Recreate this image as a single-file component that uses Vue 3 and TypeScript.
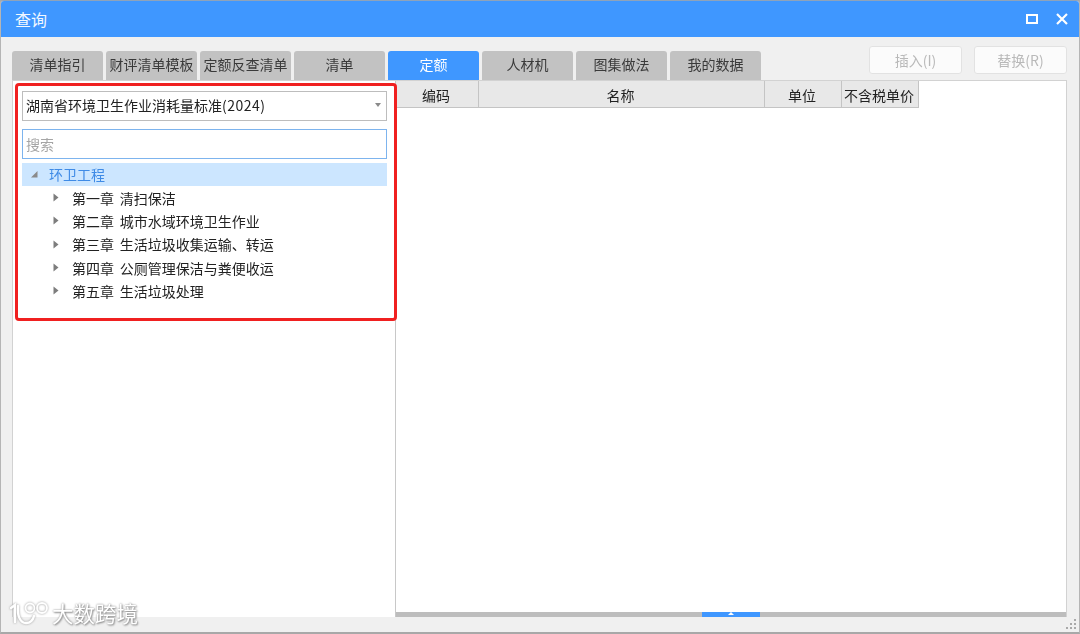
<script setup lang="ts">
const tabs: string[] = ['清单指引', '财评清单模板', '定额反查清单', '清单', '定额', '人材机', '图集做法', '我的数据']
const activeTab = '定额'
const chapters: string[] = [
  '第一章 清扫保洁',
  '第二章 城市水域环境卫生作业',
  '第三章 生活垃圾收集运输、转运',
  '第四章 公厕管理保洁与粪便收运',
  '第五章 生活垃圾处理',
]
const columns = [
  { label: '编码', cls: 'c1' },
  { label: '名称', cls: 'c2' },
  { label: '单位', cls: 'c3' },
  { label: '不含税单价', cls: 'c4' },
]
</script>

<template>
  <div class="window">
    <header class="titlebar">
      <span class="title">查询</span>
      <div class="winctl">
        <svg width="12" height="10" viewBox="0 0 12 10"><rect x="1" y="1" width="10" height="8" fill="none" stroke="#fff" stroke-width="2" /></svg>
        <svg width="12" height="12" viewBox="0 0 12 12"><path d="M1 1 L11 11 M11 1 L1 11" stroke="#fff" stroke-width="2.2" fill="none" /></svg>
      </div>
    </header>

    <div class="body">
      <div class="toolbar">
        <nav class="tabs">
          <div v-for="t in tabs" :key="t" class="tab" :class="{ active: t === activeTab }">{{ t }}</div>
        </nav>
        <div class="actions">
          <button class="btn" disabled>插入(I)</button>
          <button class="btn" disabled>替换(R)</button>
        </div>
      </div>

      <div class="panel">
        <aside class="left">
          <div class="select">
            <span>湖南省环境卫生作业消耗量标准<span class="year">(2024)</span></span>
            <i class="caret"></i>
          </div>
          <div class="search">搜索</div>
          <div class="tree-root">
            <svg class="arr-open" width="8" height="8" viewBox="0 0 8 8"><path d="M7.5 1 V7.5 H1 Z" fill="#8a8a8a" /></svg>
            <span>环卫工程</span>
          </div>
          <ul class="tree">
            <li v-for="c in chapters" :key="c">
              <svg class="arr" width="6" height="9" viewBox="0 0 6 9"><path d="M0.5 0.5 L5.5 4.5 L0.5 8.5 Z" fill="#7d7d7d" /></svg>
              <span>{{ c }}</span>
            </li>
          </ul>
        </aside>
        <section class="right">
          <div class="thead">
            <div v-for="c in columns" :key="c.label" class="th" :class="c.cls">{{ c.label }}</div>
          </div>
          <div class="tbody"></div>
          <div class="splitter">
            <div class="handle"><i></i></div>
          </div>
        </section>
      </div>

      <div class="statusbar">
        <svg class="grip" width="12" height="12" viewBox="0 0 12 12" fill="#a9a9a9">
          <rect x="8" y="0" width="2" height="2" /><rect x="4" y="4" width="2" height="2" /><rect x="8" y="4" width="2" height="2" />
          <rect x="0" y="8" width="2" height="2" /><rect x="4" y="8" width="2" height="2" /><rect x="8" y="8" width="2" height="2" />
        </svg>
      </div>
    </div>

    <div class="highlight"></div>

    <div class="watermark">
      <svg width="42" height="26" viewBox="0 0 42 26" fill="none" stroke="#fff" stroke-width="2.4" stroke-linecap="round">
        <path d="M2 8 L6 5 V22" />
        <path d="M9 6 C8 15 11 23 17 23 C21 23 24 20 25 16" />
        <circle cx="21" cy="8" r="4.500" stroke-width="1.800" />
        <circle cx="33" cy="8" r="5" stroke-width="1.800" />
      </svg>
      <span>大数跨境</span>
    </div>
  </div>
</template>

<style>
html, body { margin: 0; padding: 0; background: #a8a8a8; }
</style>

<style scoped>
.window {
  position: relative;
  width: 1080px;
  height: 634px;
  box-sizing: border-box;
  display: flex;
  flex-direction: column;
  background: #f0f0f0;
  border-top: 1px solid #8fa3ba;
  border-left: 1px solid #b5b5b5;
  border-right: 1px solid #b5b5b5;
  border-bottom: 2px solid #a8a8a8;
  border-radius: 4px 4px 0 0;
  overflow: hidden;
  font-family: "Noto Sans CJK SC", "Noto Sans", sans-serif;
  font-size: 14px;
  color: #222;
  filter: blur(0.5px);
}
.titlebar {
  flex: none;
  height: 36px;
  background: #3f97ff;
  display: flex;
  align-items: center;
  justify-content: space-between;
  padding: 0 11px 0 14px;
  color: #fff;
}
.title { font-size: 16px; line-height: 40px; color: #f2f8ff; }
.winctl { display: flex; align-items: center; gap: 18px; }
.body { flex: 1; display: flex; flex-direction: column; min-height: 0; }
.toolbar {
  flex: none;
  height: 44px;
  display: flex;
  justify-content: space-between;
  align-items: flex-start;
  padding: 0 12px 0 11px;
}
.tabs { display: flex; gap: 3px; margin-top: 14px; }
.tab {
  width: 91px;
  height: 29px;
  line-height: 27px;
  text-align: center;
  background: #c2c2c2;
  border-radius: 3px 3px 0 0;
  color: #3a3a3a;
  white-space: nowrap;
  font-size: 14px;
}
.tab.active { background: #3f97ff; color: #fff; }
.actions { display: flex; gap: 12px; margin-top: 9px; }
.btn {
  width: 93px;
  height: 28px;
  padding: 0;
  background: #fbfbfb;
  border: 1px solid #e2e2e2;
  border-radius: 3px;
  font: inherit;
  font-size: 14px;
  color: #b9b9b9;
}
.panel {
  flex: 1;
  display: flex;
  margin: -1px 12px 0 11px;
  min-height: 0;
  background: #fff;
  border: 1px solid #d2d2d2;
  border-bottom: none;
}
.left {
  flex: none;
  width: 383px;
  box-sizing: border-box;
  padding: 10px 8px 0 9px;
  border-right: 1px solid #c8c8c8;
}
.select {
  height: 30px;
  box-sizing: border-box;
  border: 1px solid #bdbdbd;
  display: flex;
  align-items: center;
  justify-content: space-between;
  padding: 0 5px 2px 3px;
  color: #222;
}
.year { letter-spacing: 0.5px; }
.caret {
  width: 0;
  height: 0;
  border-left: 3.500px solid transparent;
  border-right: 3.500px solid transparent;
  border-top: 4px solid #8a8a8a;
}
.search {
  height: 30px;
  margin-top: 8px;
  box-sizing: border-box;
  border: 1px solid #7db4ee;
  padding: 0 3px;
  line-height: 28px;
  color: #a5a5a5;
}
.tree-root {
  height: 23px;
  margin-top: 4px;
  box-sizing: border-box;
  padding-bottom: 1px;
  background: #cce6ff;
  display: flex;
  align-items: center;
  color: #3f8be6;
}
.arr-open { margin: 0 11px 0 8px; }
.tree { list-style: none; margin: 0; padding: 0; }
.tree li {
  height: 23.300px;
  display: flex;
  align-items: center;
  color: #222;
  word-spacing: 2.500px;
}
.arr { margin: 0 13px 0 31px; }
.right { flex: 1; min-width: 0; display: flex; flex-direction: column; }
.thead {
  flex: none;
  display: flex;
  height: 27px;
}
.th {
  box-sizing: border-box;
  padding-right: 2px;
  background: #e8e8e8;
  border-right: 1px solid #c4c4c4;
  border-bottom: 1px solid #c4c4c4;
  text-align: center;
  line-height: 28px;
  color: #222;
  white-space: nowrap;
}
.c1 { width: 83px; }
.c2 { width: 286px; }
.c3 { width: 77px; }
.c4 { width: 77px; font-size: 14px; }
.tbody { flex: 1; }
.splitter {
  flex: none;
  height: 5px;
  background: #bdbdbd;
  display: flex;
  justify-content: center;
}
.handle {
  width: 58px;
  height: 5px;
  background: #3f97ff;
  display: flex;
  justify-content: center;
}
.handle i {
  width: 0;
  height: 0;
  border-left: 3px solid transparent;
  border-right: 3px solid transparent;
  border-bottom: 3px solid #fff;
}
.statusbar {
  flex: none;
  height: 15px;
  position: relative;
  background: #f0f0f0;
}
.grip { position: absolute; right: 1px; bottom: 1px; }
.highlight {
  position: absolute;
  left: 14px;
  top: 82px;
  width: 382px;
  height: 238px;
  box-sizing: border-box;
  border: 3px solid #f02020;
  border-radius: 4px;
  pointer-events: none;
}
.watermark {
  position: absolute;
  left: 8px;
  top: 597px;
  display: flex;
  align-items: center;
  gap: 1px;
  color: #fff;
  font-size: 21.500px;
  line-height: 30px;
  text-shadow: 0 0 2px #8a8a8a, 1px 1px 2px #8a8a8a;
}
.watermark svg { filter: drop-shadow(0 0 1px #999); }
</style>
